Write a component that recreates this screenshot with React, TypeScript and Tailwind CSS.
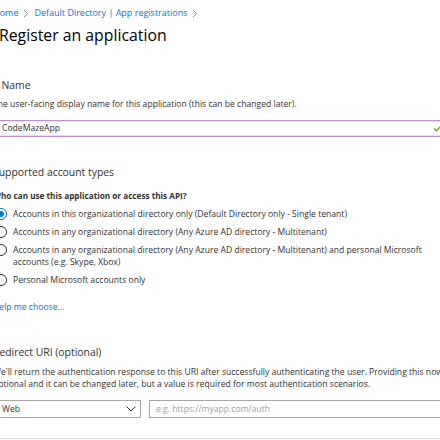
import React from 'react';

function Chevron() {
  return (
    <svg width="6" height="9" viewBox="0 0 6 9" className="mx-[5px]">
      <path d="M1 1l3.5 3.5L1 8" fill="none" stroke="#8a8886" strokeWidth="1" />
    </svg>
  );
}

function Radio({ checked, children }: { checked?: boolean; children: React.ReactNode }) {
  return (
    <div className="flex items-start pl-[2px]">
      <div
        className={
          'flex h-3 w-3 shrink-0 items-center justify-center rounded-full border ' +
          (checked ? 'border-[#0078d4]' : 'border-[#323130]')
        }
      >
        {checked && <div className="h-[6px] w-[6px] rounded-full bg-[#0078d4]" />}
      </div>
      <div className="ml-[6px] w-[432px] text-[8.6px] leading-[12px] text-[#323130]">{children}</div>
    </div>
  );
}

export default function App() {
  return (
    <div className="h-[440px] w-[440px] overflow-hidden bg-white font-['Open_Sans',sans-serif] text-[#323130]">
      <div className="-ml-[7px] w-[460px]">
        {/* Breadcrumb */}
        <div className="flex items-center pt-[5px] text-[9px] leading-[16px] text-[#0078d4]">
          <span>Home</span>
          <Chevron />
          <span>Default Directory | App registrations</span>
          <Chevron />
        </div>

        {/* Title */}
        <h1 className="mt-[3px] pl-[6px] text-[15.8px] leading-[22px] text-[#000]">Register an application</h1>

        {/* Name */}
        <div className="mt-[31px] text-[10.4px] leading-[16px]">
          <span className="text-[#a4262c]">*</span> Name
        </div>
        <p className="mt-[5px] text-[8.6px] leading-[12px]">
          The user-facing display name for this application (this can be changed later).
        </p>
        <div className="mt-[10px] flex h-[17px] items-center justify-between border border-[#c08fd2] pl-[8px] pr-[10px] text-[8.6px] shadow-[inset_0_0_0_1px_#ecdcf2]">
          <span>CodeMazeApp</span>
          <svg width="9" height="7" viewBox="0 0 9 7">
            <path d="M1 3.5l2.3 2.3L8 1" fill="none" stroke="#57a300" strokeWidth="1.2" />
          </svg>
        </div>

        {/* Supported account types */}
        <h2 className="mt-[27px] text-[10.4px] leading-[16px]">Supported account types</h2>
        <div className="mt-[10px] text-[8.2px] font-bold leading-[12px]">
          Who can use this application or access this API?
        </div>
        <div className="mt-[6px] flex flex-col gap-[6px]">
          <Radio checked>Accounts in this organizational directory only (Default Directory only - Single tenant)</Radio>
          <Radio>Accounts in any organizational directory (Any Azure AD directory - Multitenant)</Radio>
          <Radio>
            Accounts in any organizational directory (Any Azure AD directory - Multitenant) and personal Microsoft
            accounts (e.g. Skype, Xbox)
          </Radio>
          <Radio>Personal Microsoft accounts only</Radio>
        </div>
        <div className="mt-[15px] text-[8.6px] leading-[12px] text-[#0078d4]">Help me choose...</div>

        {/* Redirect URI */}
        <h2 className="mt-[31px] text-[10.4px] leading-[16px]">Redirect URI (optional)</h2>
        <p className="mt-[6px] whitespace-nowrap text-[8.6px] leading-[12px]">
          <span className="block">
            We'll return the authentication response to this URI after successfully authenticating the user. Providing this now is
          </span>
          <span className="block">
            optional and it can be changed later, but a value is required for most authentication scenarios.
          </span>
        </p>
        <div className="mt-[10px] flex gap-[8px]">
          <div className="flex h-[18px] w-[148px] items-center justify-between border border-[#a6a6a6] pl-[8px] pr-[4px] text-[8.6px]">
            <span>Web</span>
            <svg width="10" height="6" viewBox="0 0 10 6">
              <path d="M0.5 0.5l4.5 4.5 4.5-4.5" fill="none" stroke="#323130" strokeWidth="1" />
            </svg>
          </div>
          <div className="flex h-[18px] flex-1 items-center border border-[#a6a6a6] pl-[6px] text-[8.6px] text-[#a19f9d]">
            e.g. https://myapp.com/auth
          </div>
        </div>
        <div className="mt-[20px] border-t border-[#e1dfdd]" />
      </div>
    </div>
  );
}
